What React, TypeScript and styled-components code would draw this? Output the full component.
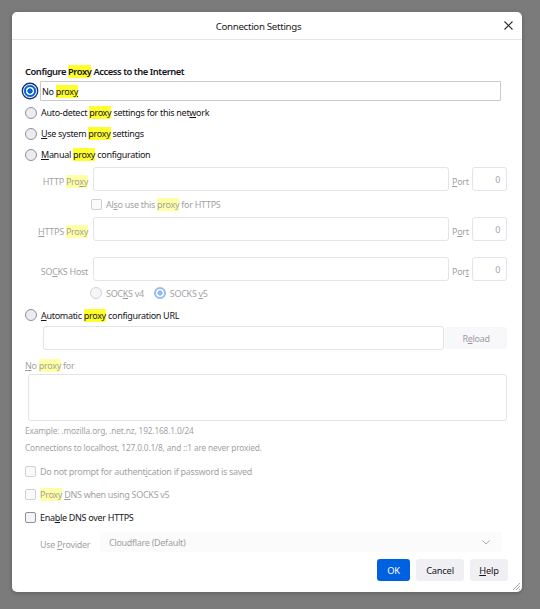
import React from "react";
import styled, { createGlobalStyle, css } from "styled-components";

const FONT = `"Noto Sans", "Open Sans", sans-serif`;

const GlobalStyle = createGlobalStyle`
  html, body { margin: 0; padding: 0; }
  body {
    background: #7b7b7b;
    font-family: ${FONT};
    color: #15141a;
  }
  * { box-sizing: border-box; }
`;

const Backdrop = styled.div`
  width: 540px;
  height: 609px;
  padding: 12px 0 0 12px;
  background: #7b7b7b;
`;

const Dialog = styled.div`
  position: relative;
  width: 510px;
  height: 580px;
  background: #fff;
  border-radius: 5px;
  display: flex;
  flex-direction: column;
  box-shadow: 0 1px 4px rgba(0, 0, 0, 0.25);
`;

const Header = styled.div`
  height: 28px;
  flex: none;
  border-bottom: 1px solid #e4e4e8;
  display: grid;
  grid-template-columns: 1fr auto 1fr;
  align-items: center;
`;

const Title = styled.div`
  grid-column: 2;
  margin-right: 17px;
  font-size: 9.7px;
  letter-spacing: -0.3px;
  color: #1c1b22;
  padding-top: 1px;
`;

const Close = styled.div`
  grid-column: 3;
  justify-self: end;
  margin-right: 9px;
  width: 9px;
  height: 9px;
  display: flex;
`;

const Body = styled.div`
  flex: 1;
  display: flex;
  flex-direction: column;
  padding: 0 15px 0 13px;
`;

const Heading = styled.div`
  margin-top: 23px;
  height: 18px;
  line-height: 18px;
  font-size: 9.4px;
  letter-spacing: -0.45px;
  font-weight: 600;
  color: #15141a;
`;

const Row = styled.div<{ $h?: number; $mt?: number; $ml?: number }>`
  display: flex;
  align-items: center;
  height: ${(p) => p.$h ?? 21}px;
  margin-top: ${(p) => p.$mt ?? 0}px;
  margin-left: ${(p) => p.$ml ?? 0}px;
  flex: none;
`;

const Text = styled.span<{ $disabled?: boolean; $small?: boolean }>`
  font-size: ${(p) => (p.$small ? 8.3 : 9)}px;
  letter-spacing: ${(p) => (p.$small ? -0.15 : -0.3)}px;
  color: #15141a;
  white-space: nowrap;
  ${(p) =>
    p.$disabled &&
    css`
      opacity: 0.42;
    `}
`;

const Mark = styled.mark`
  background: #ffff2e;
  color: inherit;
  padding: 0;
`;

const Key = styled.span`
  text-decoration: underline;
  text-underline-offset: 1px;
`;

const Radio = styled.span<{ $checked?: boolean; $disabled?: boolean; $focus?: boolean }>`
  flex: none;
  width: 12px;
  height: 12px;
  border-radius: 50%;
  border: 1px solid #8f8f9d;
  background: #ececf0;
  ${(p) =>
    p.$checked &&
    css`
      border: 2px solid #0061e0;
      background: radial-gradient(circle, #0061e0 0 2.4px, #fff 2.9px);
    `}
  ${(p) =>
    p.$focus &&
    css`
      box-shadow: 0 0 0 1px #fff, 0 0 0 2.4px #16307a;
    `}
  ${(p) =>
    p.$disabled &&
    css`
      opacity: 0.42;
    `}
`;

const Check = styled.span<{ $disabled?: boolean }>`
  flex: none;
  width: 11px;
  height: 11px;
  border: 1px solid #8f8f9d;
  border-radius: 2px;
  background: #f4f4f6;
  ${(p) =>
    p.$disabled &&
    css`
      opacity: 0.42;
    `}
`;

const ControlGap = styled.span<{ $w?: number }>`
  flex: none;
  width: ${(p) => p.$w ?? 4}px;
`;

const FocusBox = styled.div`
  flex: 1;
  height: 20px;
  margin-left: 4px;
  margin-right: 6px;
  border: 1px solid #c9c9cf;
  border-radius: 1px;
  display: flex;
  align-items: center;
  padding-left: 1px;
`;

const FieldRow = styled.div<{ $mt?: number }>`
  display: flex;
  align-items: center;
  height: 24px;
  margin-top: ${(p) => p.$mt ?? 0}px;
  flex: none;
`;

const FieldLabel = styled.div`
  width: 65px;
  padding-right: 2px;
  text-align: right;
  flex: none;
`;

const Input = styled.div<{ $h?: number }>`
  height: ${(p) => p.$h ?? 24}px;
  flex: 1;
  border: 1px solid #e3e3e8;
  border-radius: 3px;
  background: #fff;
`;

const FieldInput = styled(Input)`
  margin-left: 3px;
`;

const PortLabel = styled.div`
  width: 23px;
  padding-left: 3px;
  flex: none;
`;

const PortInput = styled.div`
  width: 35px;
  height: 24px;
  flex: none;
  border: 1px solid #e3e3e8;
  border-radius: 3px;
  display: flex;
  align-items: center;
  justify-content: flex-end;
  padding-right: 6px;
`;

const ReloadButton = styled.div`
  width: 62px;
  height: 22px;
  margin-left: 1px;
  flex: none;
  background: #f8f8fa;
  border-radius: 3px;
  display: flex;
  align-items: center;
  justify-content: center;
`;

const ProviderLabel = styled.div`
  width: 60px;
  flex: none;
`;

const Select = styled.div`
  width: 402px;
  height: 20px;
  flex: none;
  background: #fbfbfc;
  border-radius: 3px;
  display: flex;
  align-items: center;
  justify-content: space-between;
  padding: 0 12px 0 9px;
`;

const Chevron = styled.svg`
  opacity: 0.35;
`;

const Buttons = styled.div`
  display: flex;
  justify-content: flex-end;
  gap: 6px;
  margin-top: 7px;
  margin-right: -1px;
`;

const Button = styled.div<{ $primary?: boolean; $w: number }>`
  width: ${(p) => p.$w}px;
  height: 22px;
  border-radius: 3px;
  display: flex;
  align-items: center;
  justify-content: center;
  font-size: 9.3px;
  letter-spacing: -0.2px;
  background: ${(p) => (p.$primary ? "#0061e0" : "#f0f0f4")};
  color: ${(p) => (p.$primary ? "#fff" : "#15141a")};
`;

const Grip = styled.svg`
  position: absolute;
  right: 1px;
  bottom: 1px;
`;

export default function App() {
  return (
    <>
      <GlobalStyle />
      <Backdrop>
        <Dialog>
          <Header>
            <Title>Connection Settings</Title>
            <Close>
              <svg width="9" height="9" viewBox="0 0 9 9">
                <path d="M0.5 0.5 L8.5 8.5 M8.5 0.5 L0.5 8.5" stroke="#2b2a33" strokeWidth="1.1" />
              </svg>
            </Close>
          </Header>
          <Body>
            <Heading>
              Configure <Mark>Proxy</Mark> Access to the Internet
            </Heading>

            <Row $h={20} $ml={-1}>
              <Radio $checked $focus />
              <FocusBox>
                <Text>
                  No <Mark>prox<Key>y</Key></Mark>
                </Text>
              </FocusBox>
            </Row>
            <Row $mt={1}>
              <Radio />
              <ControlGap />
              <Text>
                Auto-detect <Mark>proxy</Mark> settings for this net<Key>w</Key>ork
              </Text>
            </Row>
            <Row>
              <Radio />
              <ControlGap />
              <Text>
                <Key>U</Key>se system <Mark>proxy</Mark> settings
              </Text>
            </Row>
            <Row>
              <Radio />
              <ControlGap />
              <Text>
                <Key>M</Key>anual <Mark>proxy</Mark> configuration
              </Text>
            </Row>

            <FieldRow $mt={2}>
              <FieldLabel>
                <Text $disabled>
                  HTTP <Mark>Pro<Key>x</Key>y</Mark>
                </Text>
              </FieldLabel>
              <FieldInput />
              <PortLabel>
                <Text $disabled>
                  <Key>P</Key>ort
                </Text>
              </PortLabel>
              <PortInput>
                <Text $disabled>0</Text>
              </PortInput>
            </FieldRow>
            <Row $h={26} $ml={66}>
              <Check $disabled />
              <ControlGap />
              <Text $disabled>
                Al<Key>s</Key>o use this <Mark>proxy</Mark> for HTTPS
              </Text>
            </Row>
            <FieldRow>
              <FieldLabel>
                <Text $disabled>
                  <Key>H</Key>TTPS <Mark>Proxy</Mark>
                </Text>
              </FieldLabel>
              <FieldInput />
              <PortLabel>
                <Text $disabled>
                  P<Key>o</Key>rt
                </Text>
              </PortLabel>
              <PortInput>
                <Text $disabled>0</Text>
              </PortInput>
            </FieldRow>
            <FieldRow $mt={16}>
              <FieldLabel>
                <Text $disabled>
                  SO<Key>C</Key>KS Host
                </Text>
              </FieldLabel>
              <FieldInput />
              <PortLabel>
                <Text $disabled>
                  Por<Key>t</Key>
                </Text>
              </PortLabel>
              <PortInput>
                <Text $disabled>0</Text>
              </PortInput>
            </FieldRow>
            <Row $h={22} $mt={1} $ml={65}>
              <Radio $disabled />
              <ControlGap />
              <Text $disabled>
                SOC<Key>K</Key>S v4
              </Text>
              <ControlGap $w={10} />
              <Radio $checked $disabled />
              <ControlGap />
              <Text $disabled>
                SOCKS <Key>v</Key>5
              </Text>
            </Row>
            <Row $h={20} $mt={1}>
              <Radio />
              <ControlGap />
              <Text>
                <Key>A</Key>utomatic <Mark>proxy</Mark> configuration URL
              </Text>
            </Row>
            <Row $h={24} $mt={1} $ml={18}>
              <Input />
              <ReloadButton>
                <Text $disabled>
                  R<Key>e</Key>load
                </Text>
              </ReloadButton>
            </Row>

            <Row $h={18} $mt={6}>
              <Text $disabled>
                <Key>N</Key>o <Mark>proxy</Mark> for
              </Text>
            </Row>
            <Row $h={47} $ml={3}>
              <Input $h={47} />
            </Row>
            <Row $h={16} $mt={1}>
              <Text $disabled $small>
                Example: .mozilla.org, .net.nz, 192.168.1.0/24
              </Text>
            </Row>
            <Row $h={16} $mt={1}>
              <Text $disabled $small>
                Connections to localhost, 127.0.0.1/8, and ::1 are never proxied.
              </Text>
            </Row>

            <Row $h={20} $mt={6}>
              <Check $disabled />
              <ControlGap />
              <Text $disabled>
                Do not prompt for authent<Key>i</Key>cation if password is saved
              </Text>
            </Row>
            <Row $h={20} $mt={3}>
              <Check $disabled />
              <ControlGap />
              <Text $disabled>
                <Mark>Proxy</Mark> <Key>D</Key>NS when using SOCKS v5
              </Text>
            </Row>
            <Row $h={20} $mt={3}>
              <Check />
              <ControlGap />
              <Text>
                Ena<Key>b</Key>le DNS over HTTPS
              </Text>
            </Row>
            <Row $h={20} $mt={5} $ml={15}>
              <ProviderLabel>
                <Text $disabled>
                  Use <Key>P</Key>rovider
                </Text>
              </ProviderLabel>
              <Select>
                <Text $disabled>Cloudflare (Default)</Text>
                <Chevron width="8" height="5" viewBox="0 0 8 5">
                  <path d="M0.5 0.5 L4 4 L7.5 0.5" fill="none" stroke="#15141a" strokeWidth="1" />
                </Chevron>
              </Select>
            </Row>

            <Buttons>
              <Button $primary $w={33}>OK</Button>
              <Button $w={48}>Cancel</Button>
              <Button $w={38}>
                <Key>H</Key>elp
              </Button>
            </Buttons>
          </Body>
          <Grip width="9" height="9" viewBox="0 0 9 9">
            <path d="M8 1 L1 8 M8 4 L4 8 M8 7 L7 8" stroke="#9a9aa2" strokeWidth="0.9" />
          </Grip>
        </Dialog>
      </Backdrop>
    </>
  );
}
